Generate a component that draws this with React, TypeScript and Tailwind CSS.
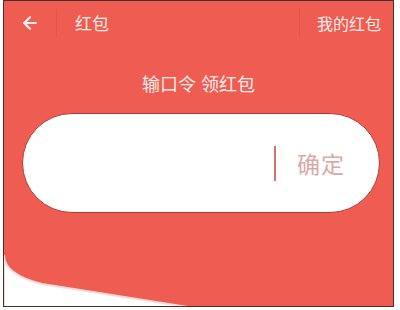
import { ArrowLeft } from "lucide-react";

const cjk = { fontFamily: '"Noto Sans CJK SC", "Noto Sans", sans-serif' };

export default function App() {
  return (
    <div className="w-[400px] h-[310px] bg-white" style={cjk}>
      <div className="ml-[3px] w-[391px] h-[307px] border border-[#4a2e2a] bg-[#ef5c52] relative overflow-hidden flex flex-col">
        {/* Header */}
        <div className="h-[43px] flex items-center text-[#fdeeea]">
          <div className="w-[52px] flex justify-center">
            <ArrowLeft className="w-[20px] h-[20px]" strokeWidth={2.6} />
          </div>
          <div className="w-px h-[28px] bg-[#e2544a]" />
          <span className="ml-[18px] text-[17px] leading-none">红包</span>
          <div className="flex-1" />
          <div className="w-px h-[28px] bg-[#e2544a]" />
          <span className="ml-[17px] mr-[12px] text-[16px] leading-none">我的红包</span>
        </div>

        {/* Title */}
        <div className="mt-[27px] h-[24px] flex items-center justify-center text-[18px] text-[#fdeeea] gap-[5px]">
          <span>输口令</span>
          <span>领红包</span>
        </div>

        {/* Input pill */}
        <div className="mt-[18px] ml-[18px] w-[358px] h-[100px] rounded-full bg-white border border-[#b03a2f] flex items-center justify-end pr-[34px]">
          <div className="w-[2px] h-[35px] bg-[#d7726c]" />
          <span className="ml-[21px] text-[23px] leading-none text-[#d8aaa6] tracking-[1px]">确定</span>
        </div>

        {/* Bottom cut-away corner */}
        <svg
          className="absolute left-0 top-0 pointer-events-none"
          width="389"
          height="305"
          viewBox="0 0 389 305"
        >
          <path
            d="M0 254 C0 268 14 277 38 283 L190 307 L0 307 Z"
            fill="#ffffff"
            stroke="#f9dcd8"
            strokeWidth="2"
          />
        </svg>
      </div>
    </div>
  );
}
